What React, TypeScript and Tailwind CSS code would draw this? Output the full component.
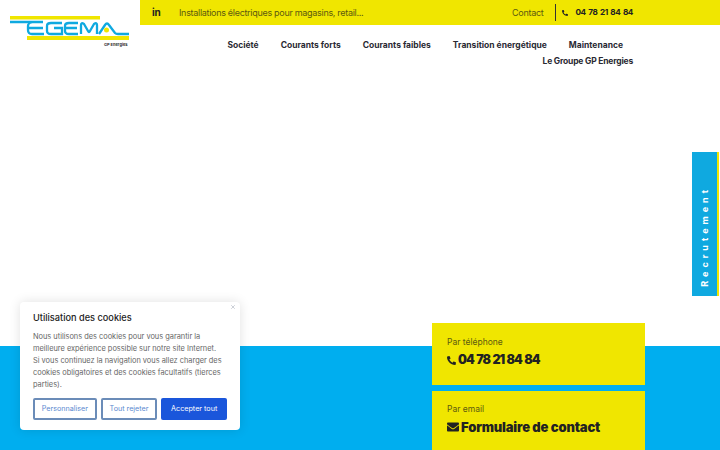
import { FaEnvelope, FaPhoneAlt } from "react-icons/fa";
import { X } from "lucide-react";

const navItems = ["Société", "Courants forts", "Courants faibles", "Transition énergétique", "Maintenance"];

const Logo = () => {
  return (
    <svg width="120" height="25" viewBox="0 0 120 25" fill="none" className="block">
      <rect x="0" y="0" width="90" height="3.5" fill="#f0e600" />
      <rect x="17" y="20" width="102" height="4" fill="#f0e600" />
      <g stroke="#0fa9e0" strokeWidth="2.3">
        <path d="M0 6H33" />
        <path d="M22 6Q18 7 18 10V14Q18 18 22 18H34M18 12H33" />
        <path d="M52 7H41Q37 7 37 10V15Q37 18 41 18H52V12H44" />
        <path d="M68 7H59Q55 7 55 10V15Q55 18 59 18H68M55 12H67" />
        <path d="M71 18V9Q71 6 74 8L78 15Q79 17 80 15L84 8Q87 6 87 9V18" />
        <path d="M89 18L95 9Q97 6 99 9L105 17Q106 18 108 18H119" />
      </g>
      <circle cx="96.500" cy="14" r="2.500" fill="#f0e600" />
    </svg>
  );
};

const App = () => {
  return (
    <div className="relative h-[450px] w-[720px] overflow-hidden bg-white font-['Inter',sans-serif] text-[#222]">
      <header className="flex">
        <div className="w-[140px] pl-[10px] pt-[16px]">
          <Logo />
          <p className="ml-[94px] mt-[2px] whitespace-nowrap text-[4px] font-bold leading-none text-[#333]">GP Energies</p>
        </div>
        <div className="flex-1">
          <div className="flex h-[25px] items-center bg-[#f0e600] pl-[12px] pr-[87px] text-[9px] tracking-[-0.3px]">
            <span className="w-[27px] text-[10px] font-bold">in</span>
            <span className="text-[#5c5a10]">Installations électriques pour magasins, retail...</span>
            <span className="ml-auto text-[#5c5a10]">Contact</span>
            <span className="ml-[12px] mr-[6px] h-[17px] w-px bg-[#333]" />
            <FaPhoneAlt size={6} />
            <span className="ml-[7px] text-[8.200px] font-bold tracking-[-0.4px] [word-spacing:1px]">04 78 21 84 84</span>
          </div>
          <nav className="mt-[13px] pr-[87px] text-right text-[8.500px] font-bold leading-[15px] text-[#2a2a33]">
            <div className="flex justify-end gap-[22px] pr-[10px]">
              {navItems.map((item) => (
                <a key={item}>{item}</a>
              ))}
            </div>
            <a className="mt-[1px] block tracking-[-0.2px]">Le Groupe GP Energies</a>
          </nav>
        </div>
      </header>

      <section className="mt-[277px] flex h-[200px] justify-end bg-[#00aeef] pr-[75px]">
        <div className="-mt-[23px] flex w-[213px] flex-col gap-[6px]">
          <div className="h-[62px] bg-[#f0e600] px-[15px] pt-[12px]">
            <p className="text-[8.500px] leading-[14px] text-[#5c5a10]">Par téléphone</p>
            <p className="mt-[1px] flex items-center gap-[2px] text-[12.500px] font-black leading-[20px] tracking-[-1px] text-[#222] [word-spacing:1px]">
              <FaPhoneAlt size={9} />
              04 78 21 84 84
            </p>
          </div>
          <div className="h-[62px] bg-[#f0e600] px-[15px] pt-[11px]">
            <p className="text-[8.500px] leading-[14px] text-[#5c5a10]">Par email</p>
            <p className="mt-[1px] flex items-center gap-[2px] text-[13px] font-black leading-[20px] tracking-[-0.150px] text-[#222]">
              <FaEnvelope size={12} />
              Formulaire de contact
            </p>
          </div>
        </div>
      </section>

      {/* recrutement tab */}
      <div className="absolute left-[692px] top-[152px] flex h-[144px] w-[27px] items-end justify-center border-r-[2px] border-[#f0e600] bg-[#0fa9e0] pb-[9px]">
        <span className="rotate-180 whitespace-nowrap text-[9px] font-bold tracking-[4px] text-white [writing-mode:vertical-rl]">Recrutement</span>
      </div>

      {/* cookie popup */}
      <div className="absolute left-[20px] top-[302px] w-[220px] rounded-[4px] bg-white px-[13px] pb-[10px] pt-[9px] shadow-[0_0_12px_rgba(0,0,0,0.12)]">
        <X size={6} className="absolute right-[4px] top-[2px] text-gray-400" />
        <p className="text-[9.200px] font-medium leading-[14px] text-[#222]">Utilisation des cookies</p>
        <p className="mt-[6px] whitespace-nowrap text-[7.400px] leading-[12px] text-[#666]">
          Nous utilisons des cookies pour vous garantir la
          <br />
          meilleure expérience possible sur notre site Internet.
          <br />
          Si vous continuez la navigation vous allez charger des
          <br />
          cookies obligatoires et des cookies facultatifs (tierces
          <br />
          parties).
        </p>
        <div className="mt-[7px] flex gap-[4px] text-[7.200px]">
          <button className="h-[22px] w-[64px] rounded-[2px] border-2 border-[#6b8cb8] text-[#5c8ad0]">Personnaliser</button>
          <button className="h-[22px] w-[57px] rounded-[2px] border-2 border-[#6b8cb8] text-[#5c8ad0]">Tout rejeter</button>
          <button className="h-[22px] w-[66px] rounded-[2px] bg-[#1a56db] text-white">Accepter tout</button>
        </div>
      </div>
    </div>
  );
};

export default App;
